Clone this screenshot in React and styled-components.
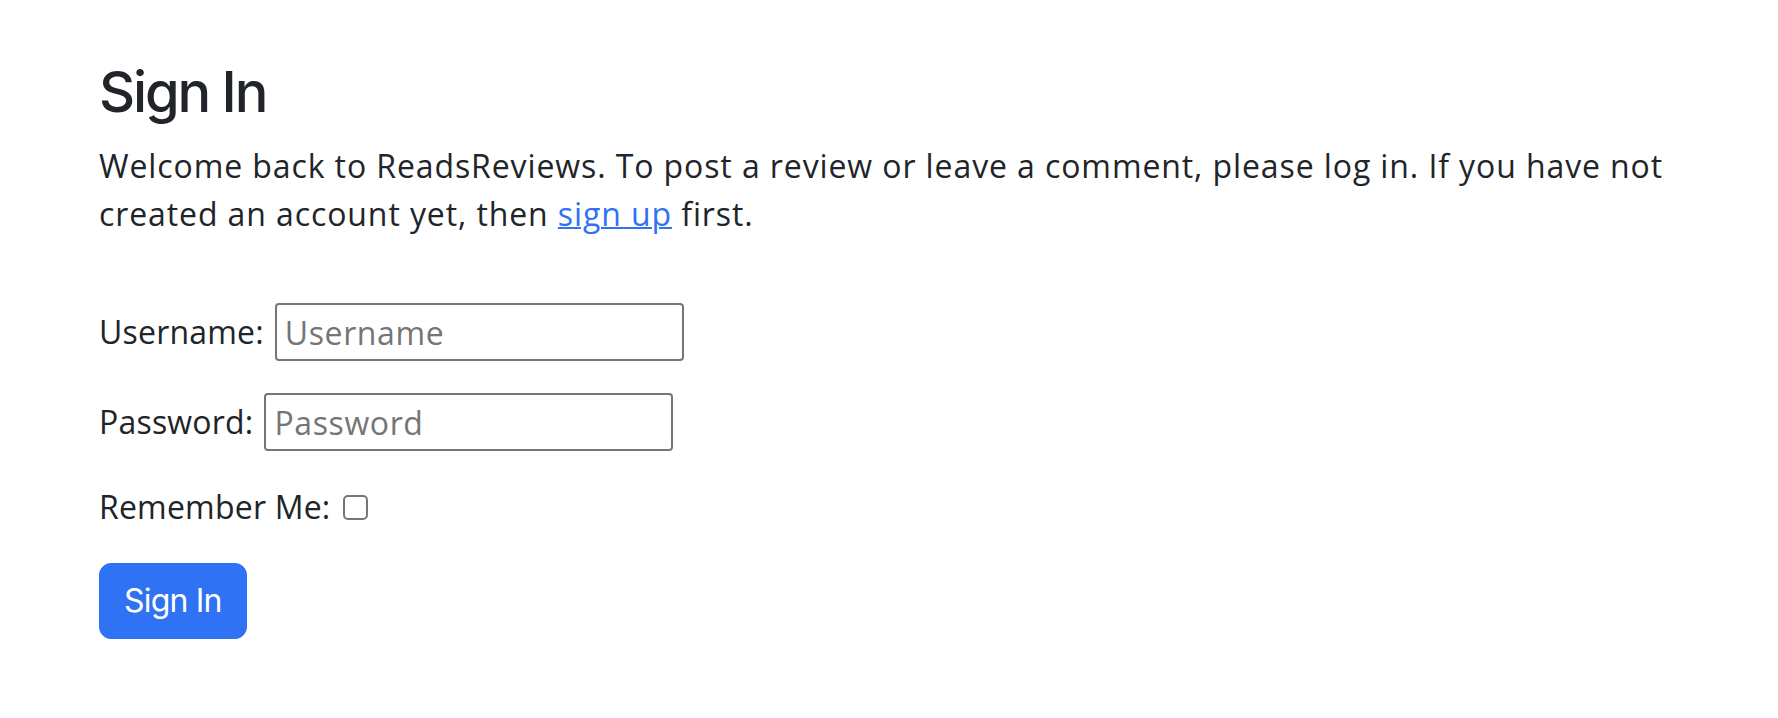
import React from "react";
import styled, { createGlobalStyle } from "styled-components";

const GlobalStyle = createGlobalStyle`
  html, body {
    margin: 0;
    padding: 0;
    background: #ffffff;
  }
  body {
    font-family: "Open Sans", Lato, sans-serif;
    color: #212529;
  }
`;

const Page = styled.main`
  padding: 59px 99px 40px 99px;
  font-family: "Open Sans", Lato, sans-serif;
  font-size: 32px;
  letter-spacing: 0.9px;
  line-height: 48px;
  color: #212529;
`;

const Title = styled.h1`
  margin: 0 0 16px 0;
  font-family: Inter, Roboto, sans-serif;
  font-weight: 500;
  font-size: 56px;
  line-height: 67px;
  letter-spacing: -2.2px;
  color: #212529;
`;

const Intro = styled.p`
  margin: 0 0 65px 0;
`;

const Link = styled.a`
  color: #2f72f3;
  text-decoration: underline;
  text-decoration-thickness: 2px;
`;

const Form = styled.form`
  display: flex;
  flex-direction: column;
  align-items: flex-start;
  gap: 32px;
`;

const Row = styled.div`
  display: flex;
  align-items: center;
  gap: ${(p) => p.$gap || 12}px;
  min-height: ${(p) => p.$height || 48}px;
`;

const Label = styled.label`
  font-size: 32px;
  letter-spacing: 0.2px;
  line-height: 48px;
  white-space: nowrap;
`;

const TextInput = styled.input`
  box-sizing: border-box;
  width: 409px;
  height: 58px;
  margin: 0;
  padding: 0 8px;
  border: 2px solid #767676;
  border-radius: 4px;
  font-family: "Open Sans", Lato, sans-serif;
  font-size: 32px;
  letter-spacing: 0.6px;
  color: #212529;
  background: #fff;
  outline: none;
  &::placeholder {
    color: #757575;
  }
`;

const Check = styled.input`
  appearance: none;
  -webkit-appearance: none;
  box-sizing: border-box;
  width: 25px;
  height: 25px;
  margin: 0;
  border: 2px solid #767676;
  border-radius: 5px;
  background: #fff;
`;

const Button = styled.button`
  box-sizing: border-box;
  height: 76px;
  padding: 0 24px;
  border: 1.5px solid #2f72f3;
  border-radius: 12px;
  background: #2f72f3;
  color: #ffffff;
  font-family: Inter, Roboto, sans-serif;
  font-size: 32px;
  font-weight: 400;
  letter-spacing: -0.8px;
  line-height: 48px;
  cursor: pointer;
`;

export default function App() {
  return (
    <>
      <GlobalStyle />
      <Page>
        <Title>Sign In</Title>
        <Intro>
          Welcome back to ReadsReviews. To post a review or leave a comment,
          please log in. If you have not created an account yet, then{" "}
          <Link href="#">sign up</Link> first.
        </Intro>
        <Form onSubmit={(e) => e.preventDefault()}>
          <Row $height={58} $gap={11}>
            <Label htmlFor="username">Username:</Label>
            <TextInput id="username" type="text" placeholder="Username" />
          </Row>
          <Row $height={58} $gap={11}>
            <Label htmlFor="password">Password:</Label>
            <TextInput id="password" type="password" placeholder="Password" />
          </Row>
          <Row $gap={13}>
            <Label htmlFor="remember">Remember Me:</Label>
            <Check id="remember" type="checkbox" />
          </Row>
          <Button type="submit">Sign In</Button>
        </Form>
      </Page>
    </>
  );
}
